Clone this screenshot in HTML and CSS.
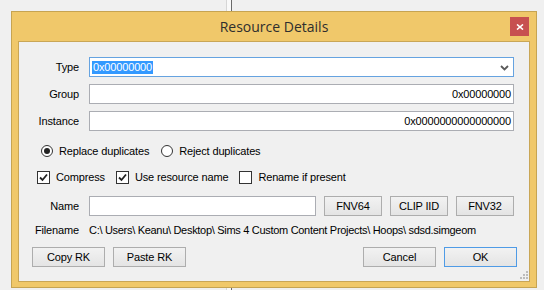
FILE: index.html
```html
<!DOCTYPE html>
<html lang="en">
<head>
    <meta charset="UTF-8">
    <meta name="viewport" content="width=device-width, initial-scale=1.0">
    <title>Resource Details</title>
    <link rel="stylesheet" href="styles.css">
</head>
<body>
    <div class="backdrop-line"></div>

    <div class="dialog">
        <div class="titlebar">
            <span class="title">Resource Details</span>
            <button class="close-btn" title="Close">
                <svg width="8" height="6" viewBox="0 0 8 6">
                    <path d="M1 0.5 L7 5.5 M7 0.5 L1 5.5" stroke="#fff" stroke-width="1.6" fill="none"/>
                </svg>
            </button>
        </div>

        <div class="panel">
            <div class="fields">
                <label class="field-label">Type</label>
                <div class="combo">
                    <span class="selected">0x00000000</span>
                    <svg class="chevron" width="9" height="6" viewBox="0 0 9 6">
                        <path d="M1 1 L4.5 4.5 L8 1" stroke="#5a5a5a" stroke-width="1.8" fill="none"/>
                    </svg>
                </div>

                <label class="field-label">Group</label>
                <div class="textbox align-right">0x00000000</div>

                <label class="field-label">Instance</label>
                <div class="textbox align-right">0x0000000000000000</div>
            </div>

            <div class="option-row radios">
                <span class="option"><span class="radio checked"></span>Replace duplicates</span>
                <span class="option"><span class="radio"></span>Reject duplicates</span>
            </div>

            <div class="option-row checks">
                <span class="option">
                    <span class="checkbox"><svg width="11" height="11" viewBox="0 0 11 11"><path d="M2 5.5 L4.5 8 L9 2.5" stroke="#222" stroke-width="1.8" fill="none"/></svg></span>Compress
                </span>
                <span class="option">
                    <span class="checkbox"><svg width="11" height="11" viewBox="0 0 11 11"><path d="M2 5.5 L4.5 8 L9 2.5" stroke="#222" stroke-width="1.8" fill="none"/></svg></span>Use resource name
                </span>
                <span class="option"><span class="checkbox"></span>Rename if present</span>
            </div>

            <div class="fields name-fields">
                <label class="field-label">Name</label>
                <div class="name-line">
                    <div class="textbox"></div>
                    <button class="btn small">FNV64</button>
                    <button class="btn small">CLIP IID</button>
                    <button class="btn small">FNV32</button>
                </div>

                <label class="field-label short">Filename</label>
                <div class="path">C:\ Users\ Keanu\ Desktop\ Sims 4 Custom Content Projects\ Hoops\ sdsd.simgeom</div>
            </div>

            <div class="button-bar">
                <div class="btn-group">
                    <button class="btn">Copy RK</button>
                    <button class="btn">Paste RK</button>
                </div>
                <div class="btn-group">
                    <button class="btn">Cancel</button>
                    <button class="btn default">OK</button>
                </div>
            </div>

            <svg class="grip" width="9" height="9" viewBox="0 0 9 9">
                <rect x="6" y="0" width="2" height="2" fill="#bcbcbc"/>
                <rect x="3" y="3" width="2" height="2" fill="#bcbcbc"/>
                <rect x="6" y="3" width="2" height="2" fill="#bcbcbc"/>
                <rect x="0" y="6" width="2" height="2" fill="#bcbcbc"/>
                <rect x="3" y="6" width="2" height="2" fill="#bcbcbc"/>
                <rect x="6" y="6" width="2" height="2" fill="#bcbcbc"/>
            </svg>
        </div>
    </div>
</body>
</html>
```

FILE: styles.css
```css
* {
    margin: 0;
    padding: 0;
    box-sizing: border-box;
}

body {
    background-color: #f0f0f0;
    font-family: 'Liberation Sans', Arial, sans-serif;
    font-size: 11px;
    letter-spacing: -0.15px;
    color: #000;
    overflow: hidden;
    height: 290px;
}

/* window behind the dialog */
.backdrop-line {
    position: absolute;
    top: 0;
    left: 226px;
    width: 6px;
    height: 290px;
    background-color: #f9f9f9;
    border-left: 1px solid #d6d6d6;
    border-right: 1px solid #6a6a6a;
}

.dialog {
    position: relative;
    margin: 11px 0 0 11px;
    width: 526px;
    height: 277px;
    background-color: #f0c86a;
    border: 1px solid #c6a452;
    padding: 0 6px 5px;
    display: flex;
    flex-direction: column;
}

.titlebar {
    position: relative;
    height: 29px;
    display: flex;
    align-items: center;
    justify-content: center;
}

.title {
    font-family: 'Open Sans', 'Liberation Sans', sans-serif;
    font-size: 14px;
    letter-spacing: 0;
    color: #2e2e2e;
    padding-bottom: 1px;
}

.close-btn {
    position: absolute;
    top: 5px;
    right: 1px;
    width: 19px;
    height: 19px;
    border: none;
    background-color: #c75050;
    display: flex;
    align-items: center;
    justify-content: center;
}

.panel {
    position: relative;
    flex: 1;
    background-color: #f0f0f0;
    border: 1px solid #c9a656;
    padding: 15px 12px 0 0;
}

.fields {
    display: grid;
    grid-template-columns: 60px 1fr;
    column-gap: 10px;
    row-gap: 7px;
    margin-right: 3px;
}

.field-label {
    display: flex;
    align-items: center;
    justify-content: flex-end;
    height: 20px;
}

.field-label.short {
    height: 14px;
}

.combo {
    height: 20px;
    background-color: #fff;
    border: 1px solid #66a3e0;
    display: flex;
    align-items: center;
    justify-content: space-between;
    padding: 0 4px 0 2px;
}

.selected {
    background-color: #3399ff;
    color: #fff;
    line-height: 13px;
    padding: 0 1px;
}

.chevron {
    margin-top: 1px;
}

.textbox {
    height: 20px;
    background-color: #fff;
    border: 1px solid #abadb3;
    display: flex;
    align-items: center;
    padding: 0 2px;
}

.align-right {
    justify-content: flex-end;
}

.option-row {
    display: flex;
    align-items: center;
    height: 14px;
}

.radios {
    margin-top: 13px;
    padding-left: 22px;
    gap: 12px;
}

.checks {
    margin-top: 12px;
    padding-left: 18px;
    gap: 11px;
}

.option {
    display: flex;
    align-items: center;
}

.radio {
    width: 12px;
    height: 12px;
    border: 1px solid #333;
    border-radius: 50%;
    background-color: #fff;
    margin-right: 6px;
    display: flex;
    align-items: center;
    justify-content: center;
}

.radio.checked::after {
    content: '';
    width: 6px;
    height: 6px;
    border-radius: 50%;
    background-color: #222;
}

.checkbox {
    width: 13px;
    height: 13px;
    border: 1px solid #333;
    background-color: #fff;
    margin-right: 6px;
    display: flex;
    align-items: center;
    justify-content: center;
}

.name-fields {
    margin-top: 12px;
}

.name-line {
    display: flex;
    gap: 8px;
}

.name-line .textbox {
    flex: 1;
}

.path {
    height: 14px;
    display: flex;
    align-items: center;
    white-space: nowrap;
    letter-spacing: -0.3px;
}

.btn {
    height: 20px;
    width: 73px;
    border: 1px solid #adadad;
    background: linear-gradient(#f2f2f2, #e4e4e4);
    font-family: 'Liberation Sans', Arial, sans-serif;
    font-size: 11px;
    letter-spacing: -0.15px;
    color: #000;
}

.btn.small {
    width: 58px;
}

.btn.default {
    border-color: #4f9be6;
}

.button-bar {
    display: flex;
    justify-content: space-between;
    margin-top: 10px;
    padding-left: 13px;
}

.btn-group {
    display: flex;
    gap: 8px;
}

.grip {
    position: absolute;
    right: 0;
    bottom: 1px;
}
```
